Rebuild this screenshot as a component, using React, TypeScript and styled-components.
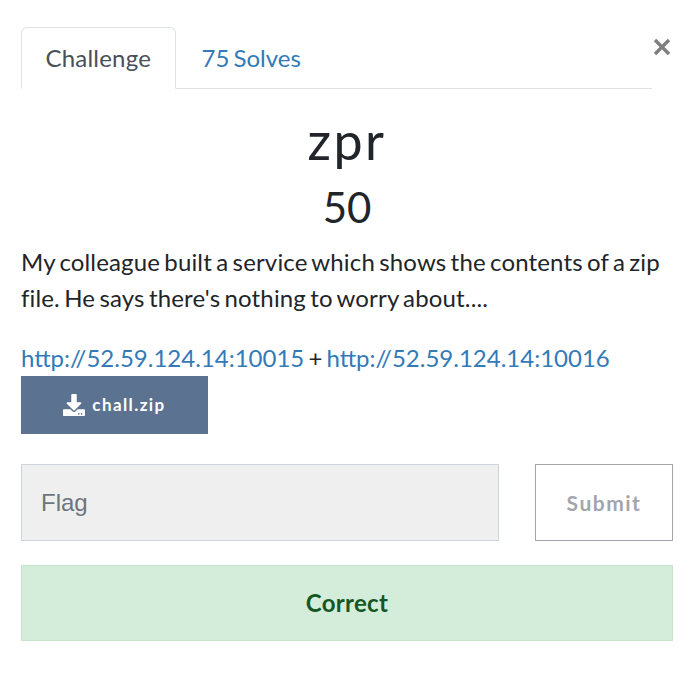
import styled, { createGlobalStyle } from "styled-components";
import { FaDownload } from "react-icons/fa";

const GlobalStyle = createGlobalStyle`
  html, body {
    margin: 0;
    padding: 0;
    background: #fff;
  }
  * {
    box-sizing: border-box;
  }
`;

const Modal = styled.div`
  position: relative;
  width: 696px;
  height: 697px;
  padding: 27px 23px 0 21px;
  font-family: Lato, "Liberation Sans", sans-serif;
  font-size: 24px;
  line-height: 36px;
  word-spacing: -2px;
  color: #212529;
  overflow: hidden;
`;

const CloseButton = styled.span`
  position: absolute;
  top: 28px;
  right: 23px;
  width: 22px;
  height: 38px;
  display: flex;
  align-items: center;
  justify-content: center;
  color: #7f7f7f;
`;

const Tabs = styled.nav`
  display: flex;
  width: 631px;
  border-bottom: 1.5px solid #dee2e6;
  height: 62px;
`;

const Tab = styled.a<{ $active?: boolean }>`
  display: block;
  height: 62px;
  padding: 12px 24px 0 ${(p) => (p.$active ? "23.5px" : "24.5px")};
  border: 1.5px solid ${(p) => (p.$active ? "#dee2e6" : "transparent")};
  border-bottom: ${(p) => (p.$active ? "1.5px solid #fff" : "none")};
  border-radius: 6px 6px 0 0;
  letter-spacing: ${(p) => (p.$active ? "0.2px" : "0")};
  color: ${(p) => (p.$active ? "#495057" : "#337ab7")};
`;

const Title = styled.h3`
  margin: 22px 0 0;
  text-align: center;
  font-size: 52px;
  font-weight: 400;
  letter-spacing: 2.5px;
  line-height: 58px;
`;

const Points = styled.h4`
  margin: 13px 0 0;
  text-align: center;
  font-size: 42px;
  font-weight: 400;
  line-height: 50px;
`;

const Description = styled.p`
  margin: 12px 0 24px;
  width: 645px;
  letter-spacing: 0.15px;
`;

const Link = styled.a`
  color: #337ab7;
`;

const Files = styled.div`
  display: block;
  height: 58px;
`;

const FileButton = styled.a`
  display: flex;
  align-items: center;
  justify-content: center;
  gap: 7px;
  width: 187px;
  height: 58px;
  background: #5b7290;
  color: #fff;
  font-size: 17px;
  font-weight: 700;
  letter-spacing: 1.4px;
  line-height: 20px;
`;

const SubmitRow = styled.div`
  display: flex;
  justify-content: space-between;
  width: 652px;
  margin-top: 30px;
`;

const FlagInput = styled.div`
  width: 478px;
  height: 77px;
  display: flex;
  align-items: center;
  padding-left: 19px;
  background: #efefef;
  border: 1.5px solid #ced4da;
  font-family: "Liberation Sans", Arial, sans-serif;
  color: #6c757d;
`;

const SubmitButton = styled.button`
  width: 138px;
  height: 77px;
  background: #fff;
  border: 1.5px solid #a3a5ad;
  border-radius: 0;
  padding: 0;
  font-family: Lato, sans-serif;
  font-size: 21px;
  font-weight: 700;
  letter-spacing: 1.5px;
  color: #a3a5ad;
`;

const Notification = styled.div`
  width: 652px;
  height: 76px;
  margin-top: 24px;
  display: flex;
  align-items: center;
  justify-content: center;
  background: #d4edda;
  border: 1.5px solid #c3e6cb;
  color: #155724;
  font-weight: 700;
  letter-spacing: 0.3px;
`;

export default function App() {
  return (
    <>
      <GlobalStyle />
      <Modal>
        <CloseButton>
          <svg width="18" height="18" viewBox="0 0 18 18" aria-hidden="true">
            <path d="M2 2 L16 16 M16 2 L2 16" stroke="currentColor" strokeWidth="3.4" fill="none" />
          </svg>
        </CloseButton>
        <Tabs>
          <Tab $active>Challenge</Tab>
          <Tab>75 Solves</Tab>
        </Tabs>
        <Title>zpr</Title>
        <Points>50</Points>
        <Description>
          My colleague built a service which shows the contents of a zip file. He says there's nothing to worry about....
        </Description>
        <div>
          <Link>http://52.59.124.14:10015</Link> + <Link>http://52.59.124.14:10016</Link>
        </div>
        <Files>
          <FileButton>
            <FaDownload size={22} />
            chall.zip
          </FileButton>
        </Files>
        <SubmitRow>
          <FlagInput>Flag</FlagInput>
          <SubmitButton>Submit</SubmitButton>
        </SubmitRow>
        <Notification>Correct</Notification>
      </Modal>
    </>
  );
}
